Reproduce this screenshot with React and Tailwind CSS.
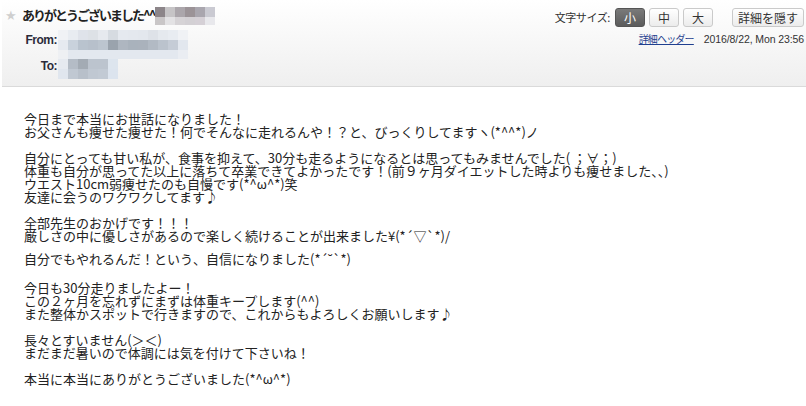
const titleMosaic = [
  ['bg-[#8c8589]', 'bg-[#c6c4c6]', 'bg-[#aba6ab]', 'bg-[#9b9397]', 'bg-[#a9a6ae]', 'bg-[#cacad2]'],
  ['bg-[#c9c6c7]', 'bg-[#e3e2e4]', 'bg-[#d6d3d6]', 'bg-[#d3d0d4]', 'bg-[#d5d0d6]', 'bg-[#e8e8ec]'],
]

const fromMosaic = [
  ['bg-[#f0f2f5]', 'bg-[#e8ecf1]', 'bg-[#dfe3ea]', 'bg-[#dde1e6]', 'bg-[#e6e9ee]', 'bg-[#d6dbe1]', 'bg-[#e5e9ef]', 'bg-[#e4e8ee]', 'bg-[#e3e7ed]', 'bg-[#dee2e8]', 'bg-[#e5e9ee]', 'bg-[#e8ecf1]', 'bg-[#f0f2f5]'],
  ['bg-[#e6eaf0]', 'bg-[#c9d2dc]', 'bg-[#b9c3ce]', 'bg-[#b7c0cb]', 'bg-[#bcc5cf]', 'bg-[#9aa3ad]', 'bg-[#aeb6c0]', 'bg-[#a9b2bc]', 'bg-[#aab2bc]', 'bg-[#b2bac4]', 'bg-[#bbc3cd]', 'bg-[#c5ccd6]', 'bg-[#e2e7ee]'],
  ['bg-[#eef0f3]', 'bg-[#e3e8ef]', 'bg-[#e3e8ef]', 'bg-[#e3e8ef]', 'bg-[#e3e8ef]', 'bg-[#e3e8ef]', 'bg-[#e3e8ef]', 'bg-[#e3e8ef]', 'bg-[#e3e8ef]', 'bg-[#e3e8ef]', 'bg-[#e3e8ef]', 'bg-[#e3e8ef]', 'bg-[#eaedf2]'],
]

const toMosaic = [
  ['bg-[#e6eaf0]', 'bg-[#b4bcc6]', 'bg-[#a3abb4]', 'bg-[#bcc4ce]', 'bg-[#bcc4ce]', 'bg-[#dde5ee]'],
  ['bg-[#e0e6ee]', 'bg-[#c0c8d2]', 'bg-[#b8c0ca]', 'bg-[#c0c8d2]', 'bg-[#c2cad4]', 'bg-[#dce4ee]'],
]

// '' = 空行
const lines = [
  '今日まで本当にお世話になりました！',
  'お父さんも痩せた痩せた！何でそんなに走れるんや！？と、びっくりしてますヽ(*^^*)ノ',
  '',
  '自分にとっても甘い私が、食事を抑えて、30分も走るようになるとは思ってもみませんでした( ；∀；)',
  '体重も自分が思ってた以上に落ちて卒業できてよかったです！(前９ヶ月ダイエットした時よりも痩せました、、)',
  'ウエスト10cm弱痩せたのも自慢です(*^ω^*)笑',
  '友達に会うのワクワクしてます♪',
  '',
  '全部先生のおかげです！！！',
  '厳しさの中に優しさがあるので楽しく続けることが出来ました¥(*´▽`*)/',
]

const lines2 = [
  '今日も30分走りましたよー！',
  'この２ヶ月を忘れずにまずは体重キープします(^^)',
  'また整体かスポットで行きますので、これからもよろしくお願いします♪',
  '',
  '長々とすいません(＞＜)',
  'まだまだ暑いので体調には気を付けて下さいね！',
  '',
  '本当に本当にありがとうございました(*^ω^*)',
]

function Mosaic({ rows, heights }) {
  return (
    <div className="flex flex-col">
      {rows.map((row, i) => (
        <div key={i} className={`flex ${heights[i]}`}>
          {row.map((c, j) => (
            <div key={j} className={`w-[10px] h-full ${c}`} />
          ))}
        </div>
      ))}
    </div>
  )
}

function SizeButton({ label, active }) {
  return (
    <button
      className={`h-[19px] w-[30px] rounded-[3px] border text-[12px] leading-[17px] font-['Noto_Sans_CJK_JP',sans-serif] ${
        active
          ? 'border-[#555] bg-gradient-to-b from-[#7a7a7a] to-[#5c5c5c] text-white'
          : 'border-[#cacaca] bg-gradient-to-b from-white to-[#ececec] text-[#333]'
      }`}
    >
      {label}
    </button>
  )
}

function Line({ text }) {
  return <div className="h-[13px] whitespace-pre">{text}</div>
}

export default function App() {
  return (
    <div className="w-[806px] h-[406px] bg-white overflow-hidden">
      {/* ヘッダー */}
      <div className="ml-[2px] h-[87px] border-b border-[#dadada] bg-gradient-to-b from-white to-[#efefef] flex justify-between">
        <div>
          <div className="h-[30px] flex items-center pl-[3px]">
            <span className="w-[17px] text-[13px] leading-none text-[#cfcfcf] font-['DejaVu_Sans',sans-serif]">★</span>
            <span className="w-[133px] whitespace-nowrap text-[13px] tracking-[-2px] font-bold text-[#222] font-['Noto_Sans_CJK_JP',sans-serif]">
              ありがとうございました^^
            </span>
            <div className="mt-[2px]">
              <Mosaic rows={titleMosaic} heights={['h-[10px]', 'h-[8px]']} />
            </div>
          </div>
          <div className="flex">
            <div className="w-[56px] pt-[3px] pr-[1px] text-right text-[12px] leading-[14px] font-bold text-[#2b2b3a] font-['Liberation_Sans',sans-serif] tracking-[-0.5px]">
              From:
            </div>
            <Mosaic rows={fromMosaic} heights={['h-[10px]', 'h-[10px]', 'h-[9px]']} />
          </div>
          <div className="flex">
            <div className="w-[56px] pr-[1px] text-right text-[12px] leading-[14px] font-bold text-[#2b2b3a] font-['Liberation_Sans',sans-serif] tracking-[-0.5px]">
              To:
            </div>
            <Mosaic rows={toMosaic} heights={['h-[10px]', 'h-[10px]']} />
          </div>
        </div>

        <div className="pr-[2px] flex flex-col items-end">
          <div className="pt-[8px] flex items-center">
            <span className="mr-[5px] text-[11px] tracking-[-0.4px] text-[#333] font-['Noto_Sans_CJK_JP',sans-serif]">文字サイズ:</span>
            <div className="flex gap-[4px]">
              <SizeButton label="小" active />
              <SizeButton label="中" />
              <SizeButton label="大" />
            </div>
            <button className="ml-[19px] h-[19px] w-[72px] rounded-[3px] border border-[#cacaca] bg-gradient-to-b from-white to-[#ececec] text-[12px] leading-[17px] text-[#333] font-['Noto_Sans_CJK_JP',sans-serif]">
              詳細を隠す
            </button>
          </div>
          <div className="mt-[5px] flex items-center gap-[10px] text-[11px] leading-[14px]">
            <a href="#" className="text-[10px] text-[#1f3f8f] underline tracking-[-0.8px] font-['Noto_Sans_CJK_JP',sans-serif]">詳細ヘッダー</a>
            <span className="text-[10.5px] tracking-[-0.1px] text-[#333] font-['Liberation_Sans',sans-serif]">2016/8/22, Mon 23:56</span>
          </div>
        </div>
      </div>

      {/* 本文 */}
      <div className="pl-[24px] pt-[25px] text-[13px] leading-[13px] text-[#222] font-['Noto_Sans_CJK_JP',sans-serif]">
        {lines.map((t, i) => (
          <Line key={i} text={t} />
        ))}
        <div className="mt-[10px] mb-[16px]">
          <Line text="自分でもやれるんだ！という、自信になりました(*´˘`*)" />
        </div>
        {lines2.map((t, i) => (
          <Line key={i} text={t} />
        ))}
      </div>
    </div>
  )
}
